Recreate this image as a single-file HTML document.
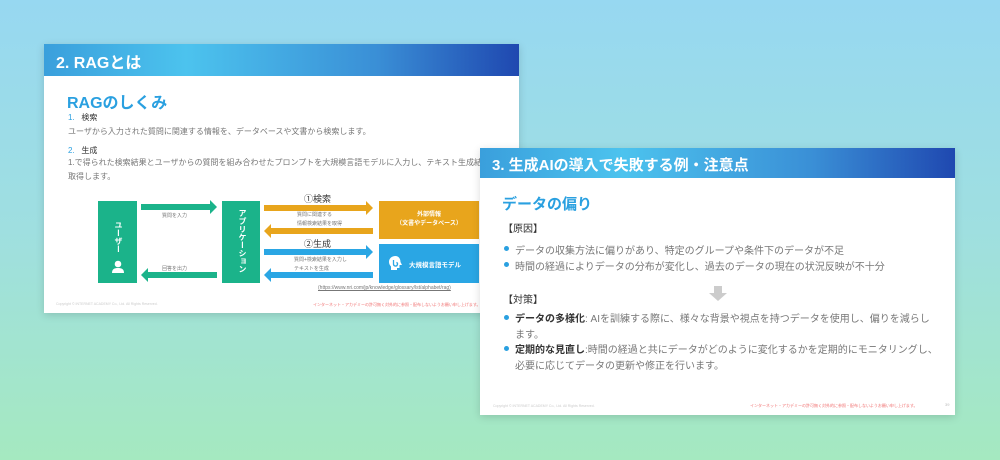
<!DOCTYPE html>
<html><head><meta charset="utf-8"><style>
*{margin:0;padding:0;box-sizing:border-box}
body{width:1000px;height:460px;overflow:hidden;position:relative;font-family:"Liberation Sans","Noto Sans CJK JP",sans-serif;background:linear-gradient(180deg,#97d8f1 0%,#9fdfe0 50%,#a5e9c0 100%)}
.a{position:absolute;white-space:nowrap}
.slide{position:absolute;background:#fff;box-shadow:0 2px 8px rgba(0,0,0,.15);overflow:hidden}
.hdr{position:absolute;left:0;top:0;right:0;background:linear-gradient(90deg,#3a9fdc 0%,#4cc3ee 30%,#3a8fd6 70%,#1f48b0 100%);color:#fff;font-weight:bold}
.g{color:#777}
.arr{position:absolute;height:6px}
.arr.r::after{content:"";position:absolute;right:-6px;top:-4px;border-left:7px solid;border-left-color:inherit;border-top:7px solid transparent;border-bottom:7px solid transparent}
.arr.l::before{content:"";position:absolute;left:-6px;top:-4px;border-right:7px solid;border-right-color:inherit;border-top:7px solid transparent;border-bottom:7px solid transparent}
.dot{position:absolute;width:5px;height:5px;border-radius:50%;background:#2aa0e0}
</style></head><body>

<div class="slide" style="left:44px;top:44px;width:475px;height:269px">
 <div class="hdr" style="height:32px;font-size:16px;padding:5px 0 0 12px">2. RAGとは</div>
 <div class="a" style="left:23px;top:45px;font-size:16px;font-weight:bold;color:#2aa0e0">RAGのしくみ</div>
 <div class="a" style="left:24px;top:68px;font-size:8px;color:#333"><span style="color:#2aa0e0">1.</span>&nbsp;&nbsp;&nbsp;検索</div>
 <div class="a g" style="left:24px;top:82px;font-size:8px">ユーザから入力された質問に関連する情報を、データベースや文書から検索します。</div>
 <div class="a" style="left:24px;top:101px;font-size:8px;color:#333"><span style="color:#2aa0e0">2.</span>&nbsp;&nbsp;&nbsp;生成</div>
 <div class="a g" style="left:24px;top:113px;font-size:8px">1.で得られた検索結果とユーザからの質問を組み合わせたプロンプトを大規模言語モデルに入力し、テキスト生成結果を</div>
 <div class="a g" style="left:24px;top:127px;font-size:8px">取得します。</div>

 <div class="a" style="left:54px;top:157px;width:39px;height:82px;background:#1bb38a;color:#fff;font-size:8px;font-weight:bold;writing-mode:vertical-rl;padding-top:20px;padding-right:13px">ユーザー</div>
 <svg class="a" style="left:67px;top:216px" width="14" height="14" viewBox="0 0 14 14"><circle cx="7" cy="4" r="3.3" fill="#fff"/><path d="M1 13c0-4 2.5-5 6-5s6 1 6 5z" fill="#fff"/></svg>
 <div class="a" style="left:178px;top:157px;width:38px;height:82px;background:#1bb38a;color:#fff;font-size:8px;font-weight:bold;writing-mode:vertical-rl;padding-top:8px;padding-right:12px">アプリケーション</div>

 <div class="arr r" style="left:97px;top:160px;width:70px;background:#1bb38a;border-color:#1bb38a"></div>
 <div class="a g" style="left:118px;top:168px;font-size:5px">質問を入力</div>
 <div class="arr l" style="left:103px;top:228px;width:70px;background:#1bb38a;border-color:#1bb38a"></div>
 <div class="a g" style="left:118px;top:221px;font-size:5px">回答を出力</div>

 <div class="a" style="left:260px;top:148px;font-size:9px;color:#333">①検索</div>
 <div class="arr r" style="left:220px;top:161px;width:103px;background:#e8a51c;border-color:#e8a51c"></div>
 <div class="a g" style="left:253px;top:167px;font-size:5px">質問に関連する</div>
 <div class="a g" style="left:253px;top:176px;font-size:5px">情報検索結果を取得</div>
 <div class="arr l" style="left:226px;top:184px;width:103px;background:#e8a51c;border-color:#e8a51c"></div>
 <div class="a" style="left:260px;top:193px;font-size:9px;color:#333">②生成</div>
 <div class="arr r" style="left:220px;top:205px;width:103px;background:#2aa6e4;border-color:#2aa6e4"></div>
 <div class="a g" style="left:250px;top:212px;font-size:5px">質問+検索結果を入力し</div>
 <div class="a g" style="left:250px;top:221px;font-size:5px">テキストを生成</div>
 <div class="arr l" style="left:226px;top:228px;width:103px;background:#2aa6e4;border-color:#2aa6e4"></div>

 <div class="a" style="left:335px;top:157px;width:100px;height:38px;background:#e8a51c;color:#fff;font-size:6px;font-weight:bold;text-align:center;padding-top:10px;line-height:9px;white-space:normal">外部情報<br>（文書やデータベース）</div>
 <div class="a" style="left:335px;top:200px;width:100px;height:39px;background:#2aa6e4;color:#fff;font-size:6.5px;font-weight:bold;padding:15px 0 0 30px">大規模言語モデル</div>
 <svg class="a" style="left:344px;top:211px" width="15" height="16" viewBox="0 0 15 16"><path d="M7.5 1C3.5 1 1 3.5 1 7c0 2 1 3.5 2 4.5V15h6v-2h2.5v-3H14l-1.5-3C12.5 3.5 10.5 1 7.5 1z" fill="#fff"/><path d="M5.5 5v4a2 2 0 1 0 3-1.7" stroke="#2aa6e4" stroke-width="1.3" fill="none"/></svg>

 <div class="a g" style="left:274px;top:241px;font-size:5px;text-decoration:underline">(https://www.nri.com/jp/knowledge/glossary/lst/alphabet/rag)</div>
 <div class="a" style="left:12px;top:258px;font-size:3.5px;color:#ccc">Copyright © INTERNET ACADEMY Co., Ltd. All Rights Reserved.</div>
 <div class="a" style="left:269px;top:258px;font-size:4px;color:#f07070">インターネット・アカデミーの許可無く対外的に参照・配布しないようお願い申し上げます。</div>
</div>

<div class="slide" style="left:480px;top:148px;width:475px;height:267px">
 <div class="hdr" style="height:30px;font-size:15px;padding:6px 0 0 12px">3. 生成AIの導入で失敗する例・注意点</div>
 <div class="a" style="left:22px;top:45px;font-size:15px;font-weight:bold;color:#2aa0e0">データの偏り</div>
 <div class="a" style="left:23px;top:72px;font-size:10px;color:#333">【原因】</div>
 <div class="dot" style="left:24px;top:98px"></div>
 <div class="a g" style="left:35px;top:94px;font-size:10px">データの収集方法に偏りがあり、特定のグループや条件下のデータが不足</div>
 <div class="dot" style="left:24px;top:114px"></div>
 <div class="a g" style="left:35px;top:110px;font-size:10px">時間の経過によりデータの分布が変化し、過去のデータの現在の状況反映が不十分</div>
 <svg class="a" style="left:229px;top:138px" width="18" height="15" viewBox="0 0 18 15"><path d="M5 0h8v7h5l-9 8-9-8h5z" fill="#ccc"/></svg>
 <div class="a" style="left:23px;top:143px;font-size:10px;color:#333">【対策】</div>
 <div class="dot" style="left:24px;top:167px"></div>
 <div class="a g" style="left:35px;top:162px;font-size:10px"><b style="color:#333">データの多様化</b>: AIを訓練する際に、様々な背景や視点を持つデータを使用し、偏りを減らし</div>
 <div class="a g" style="left:35px;top:178px;font-size:10px">ます。</div>
 <div class="dot" style="left:24px;top:198px"></div>
 <div class="a g" style="left:35px;top:193px;font-size:10px"><b style="color:#333">定期的な見直し</b>:時間の経過と共にデータがどのように変化するかを定期的にモニタリングし、</div>
 <div class="a g" style="left:35px;top:209px;font-size:10px">必要に応じてデータの更新や修正を行います。</div>
 <div class="a" style="left:13px;top:256px;font-size:3.5px;color:#ccc">Copyright © INTERNET ACADEMY Co., Ltd. All Rights Reserved.</div>
 <div class="a" style="left:270px;top:255px;font-size:4px;color:#f07070">インターネット・アカデミーの許可無く対外的に参照・配布しないようお願い申し上げます。</div>
 <div class="a" style="left:465px;top:254px;font-size:4px;color:#bbb">39</div>
</div>
</body></html>
